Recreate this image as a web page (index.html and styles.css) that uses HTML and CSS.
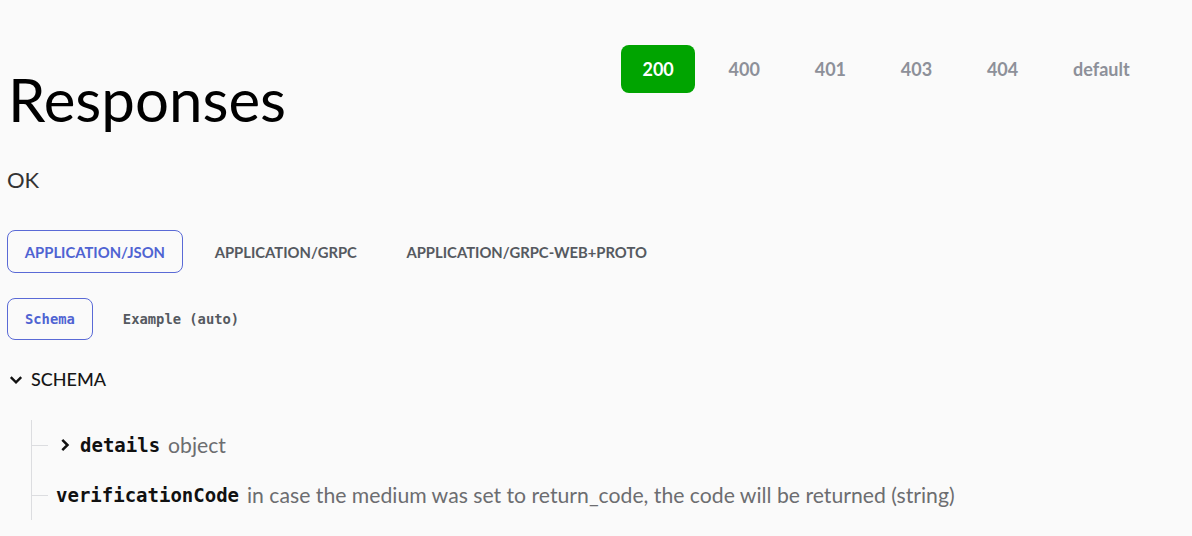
FILE: index.html
```html
<!DOCTYPE html>
<html>
<head>
<meta charset="utf-8">
<link rel="stylesheet" href="styles.css">
</head>
<body>
<div class="page">
  <div class="header">
    <h1 class="title">Responses</h1>
    <div class="status-tabs">
      <button class="status-tab active">200</button>
      <button class="status-tab">400</button>
      <button class="status-tab">401</button>
      <button class="status-tab">403</button>
      <button class="status-tab">404</button>
      <button class="status-tab">default</button>
    </div>
  </div>
  <p class="desc">OK</p>
  <div class="media-tabs">
    <button class="media-tab active">APPLICATION/JSON</button>
    <button class="media-tab">APPLICATION/GRPC</button>
    <button class="media-tab">APPLICATION/GRPC-WEB+PROTO</button>
  </div>
  <div class="view-tabs">
    <button class="view-tab active">Schema</button>
    <button class="view-tab">Example (auto)</button>
  </div>
  <div class="schema-head">
    <svg class="chev-down" width="14" height="10" viewBox="0 0 14 10"><path d="M1.8 2.2 L7 7.4 L12.2 2.2" fill="none" stroke="#111" stroke-width="2.4"/></svg>
    <span>SCHEMA</span>
  </div>
  <div class="tree">
    <div class="row">
      <svg class="chev-right" width="10" height="14" viewBox="0 0 10 14"><path d="M2.3 1.8 L7.5 7 L2.3 12.2" fill="none" stroke="#111" stroke-width="2.5"/></svg>
      <span class="prop">details</span>
      <span class="type">object</span>
    </div>
    <div class="row">
      <span class="prop">verificationCode</span>
      <span class="type">in case the medium was set to return_code, the code will be returned (string)</span>
    </div>
  </div>
</div>
</body>
</html>
```

FILE: styles.css
```css
html, body {
  margin: 0;
  padding: 0;
  background: #fafafa;
}
body {
  font-family: Lato, "Liberation Sans", sans-serif;
  color: #000;
}
.page {
  padding: 45px 41px 0 7px;
}
button {
  font-family: inherit;
  background: none;
  border: none;
  cursor: pointer;
}
.header {
  display: flex;
  justify-content: space-between;
  align-items: flex-start;
}
.title {
  margin: 18px 0 0 1px;
  font-size: 60px;
  font-weight: 400;
  line-height: 1.2;
  color: #000;
}
.status-tabs {
  display: flex;
  gap: 12px;
}
.status-tab {
  height: 48px;
  padding: 0 21.4px;
  border-radius: 8px;
  font-size: 18px;
  font-weight: 700;
  color: #8d9099;
}
.status-tab.active {
  background: #00a400;
  color: #fff;
}
.desc {
  margin: 32px 0 0 0;
  font-size: 22px;
  line-height: 1.2;
  color: #333;
}
.media-tabs {
  display: flex;
  gap: 14px;
  margin-top: 37px;
}
.media-tab {
  height: 43px;
  padding: 0 16.8px;
  border: 1px solid transparent;
  border-radius: 8px;
  font-size: 14.8px;
  font-weight: 700;
  color: #555960;
}
.media-tab.active {
  border-color: #5a6ad6;
  color: #4f63d2;
}
.view-tabs {
  display: flex;
  gap: 13px;
  margin-top: 25px;
}
.view-tab {
  height: 42px;
  padding: 0 16px;
  border: 1px solid transparent;
  border-radius: 8px;
  font-family: "DejaVu Sans Mono", monospace;
  font-size: 13.8px;
  font-weight: 700;
  color: #555960;
}
.view-tab.active {
  border-color: #5a6ad6;
  color: #4f63d2;
  padding: 0 17px;
}
.schema-head {
  display: flex;
  align-items: center;
  gap: 8px;
  margin-top: 28px;
  padding-left: 2px;
  font-size: 18px;
  line-height: 1.25;
  font-weight: 500;
  color: #161616;
}
.chev-down {
  margin-top: 1px;
}
.tree {
  margin: 29px 0 0 24px;
  border-left: 1px solid #dcdde0;
  width: 1000px;
}
.row {
  position: relative;
  display: flex;
  align-items: center;
  gap: 8px;
  height: 50px;
  padding-left: 24px;
}
.row::before {
  content: "";
  position: absolute;
  left: 0;
  top: 50%;
  width: 16px;
  border-top: 1px solid #dcdde0;
}
.row:first-child {
  padding-left: 28px;
}
.chev-right {
  margin-right: 2px;
}
.prop {
  font-family: "DejaVu Sans Mono", monospace;
  font-size: 19px;
  font-weight: 700;
  color: #111;
}
.type {
  font-size: 21.2px;
  color: #6c6d70;
}
```
